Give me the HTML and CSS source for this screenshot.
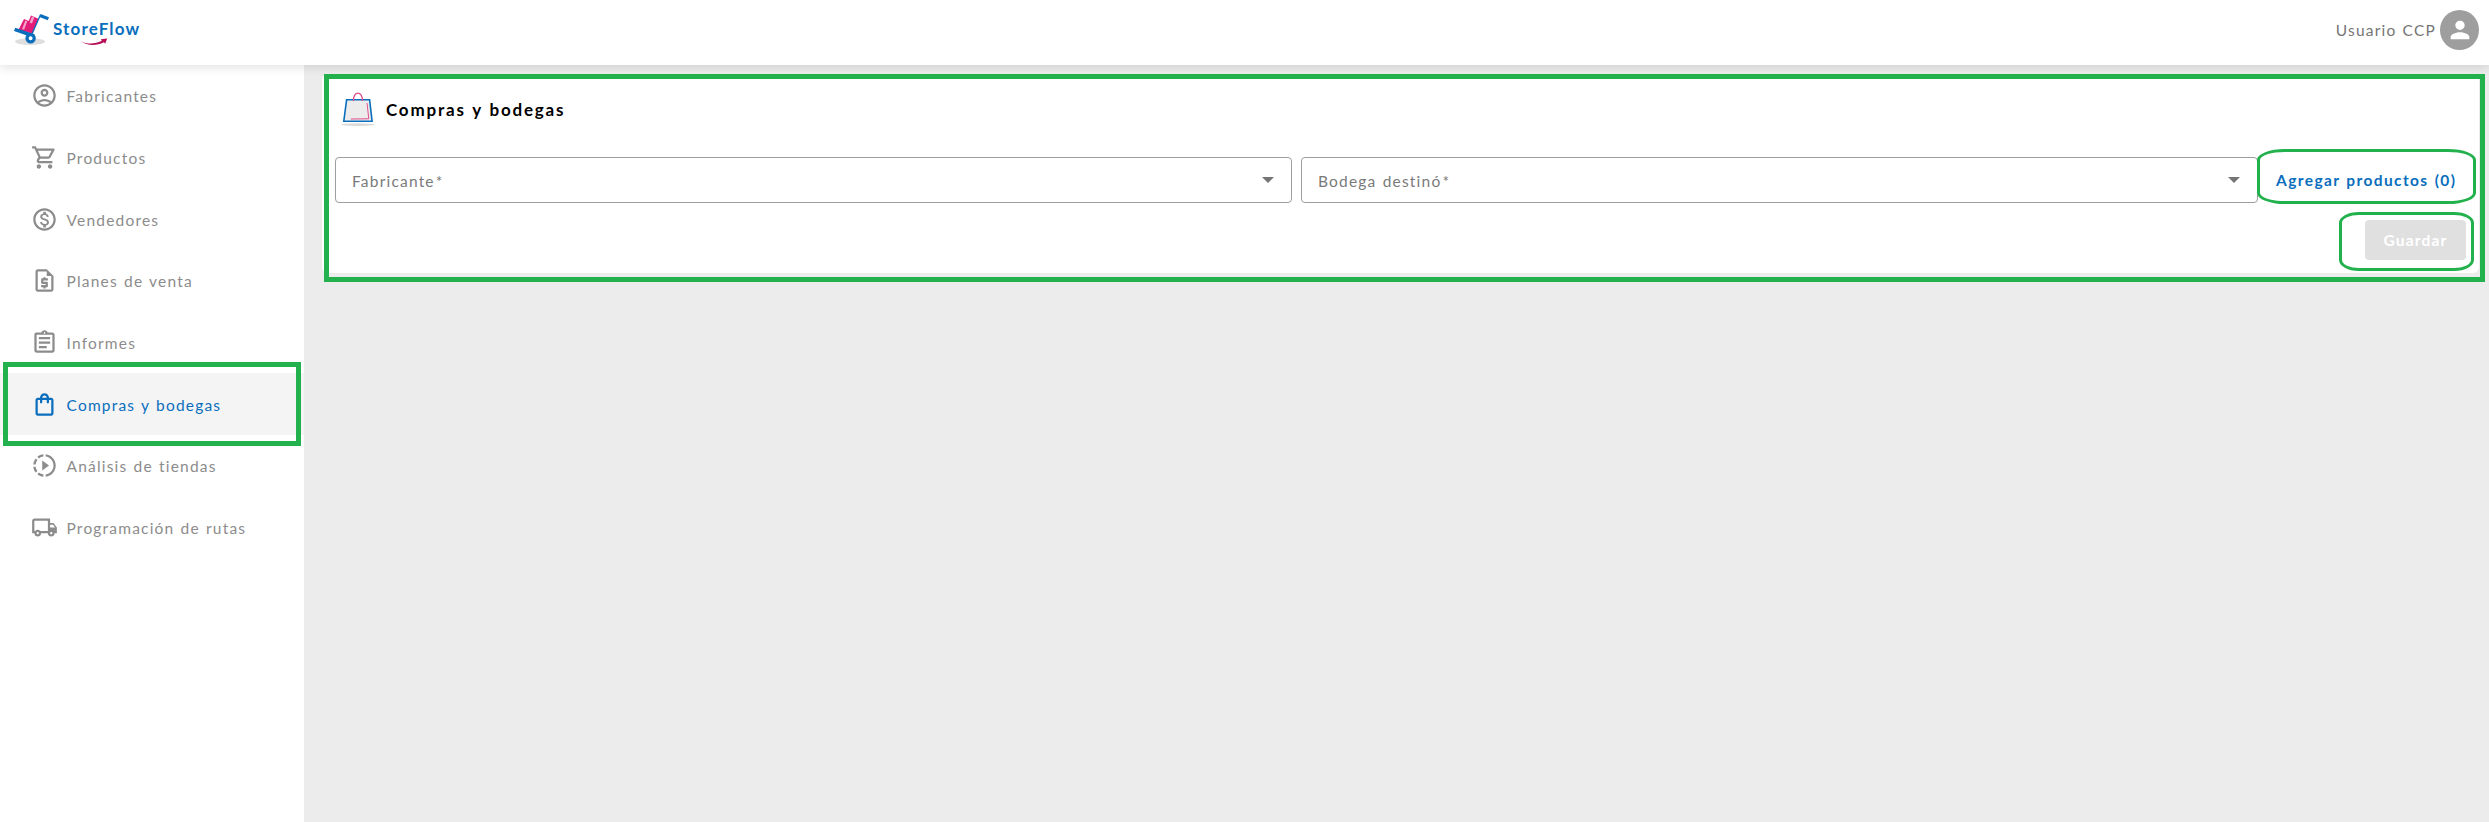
FILE: index.html
```html
<!DOCTYPE html>
<html lang="es">
<head>
<meta charset="utf-8">
<title>StoreFlow</title>
<link rel="stylesheet" href="styles.css">
</head>
<body>
<header class="topbar">
  <div class="brand">
    <svg class="brand-mark" viewBox="13 12 38 34" width="38" height="34">
      <ellipse cx="30" cy="41.6" rx="15" ry="3.4" fill="#dedede"/>
      <path d="M24 19l6 2.5-4.5 11-7-2.8z" fill="#e31c79"/>
      <path d="M31 15.5l7.5 3.2L32.5 34l-8-3z" fill="#e31c79"/>
      <path d="M25.3 20.4l2 .8-3.2 8.5-2-.8zM32 16.5l2.3 1-2.4 6-2.3-1z" fill="#f4a3c8"/>
      <path d="M40.5 14.8L31.5 35" stroke="#0a6ebd" stroke-width="1.3" fill="none"/>
      <path d="M40 15.6l8.4 3.2" stroke="#0a6ebd" stroke-width="3.2" fill="none"/>
      <path d="M14.6 29.4L34 36" stroke="#0a6ebd" stroke-width="3.6" fill="none"/>
      <circle cx="30.6" cy="38.2" r="3.6" fill="#fff" stroke="#0a6ebd" stroke-width="3.2"/>
    </svg>
    <div class="brand-text">
      <span class="brand-name">StoreFlow</span>
      <svg class="brand-swoosh" viewBox="80 38 28 8" width="28" height="8"><path d="M80.3 41c7 3.600 14.500 3.300 21.500-.2l-.9-1.500 6.300-.9-2 5.300-1.300-1.500C96.500 46 87.500 46 80.300 41z" fill="#b80d57"/></svg>
    </div>
  </div>
  <div class="user">
    <span class="user-name">Usuario CCP</span>
    <span class="avatar"><svg viewBox="0 0 24 24" width="28" height="28"><path d="M12 12c2.210 0 4-1.790 4-4s-1.790-4-4-4-4 1.790-4 4 1.790 4 4 4zm0 2c-2.670 0-8 1.340-8 4v2h16v-2c0-2.660-5.330-4-8-4z"/></svg></span>
  </div>
</header>
<div class="shell">
  <nav class="sidebar">
    <a class="item"><svg class="icon" viewBox="0 0 24 24"><path d="M12 2C6.480 2 2 6.480 2 12s4.480 10 10 10 10-4.480 10-10S17.520 2 12 2zM7.350 18.500C8.660 17.560 10.260 17 12 17s3.340.56 4.650 1.500C15.340 19.440 13.740 20 12 20s-3.340-.56-4.650-1.500zm10.790-1.380C16.450 15.800 14.320 15 12 15s-4.450.8-6.140 2.120C4.700 15.730 4 13.950 4 12c0-4.420 3.580-8 8-8s8 3.580 8 8c0 1.950-.7 3.730-1.860 5.120zM12 6c-1.930 0-3.500 1.570-3.500 3.500S10.070 13 12 13s3.500-1.570 3.500-3.500S13.930 6 12 6zm0 5c-.83 0-1.500-.67-1.500-1.500S11.170 8 12 8s1.500.67 1.500 1.500S12.830 11 12 11z"/></svg><span>Fabricantes</span></a>
    <a class="item"><svg class="icon" viewBox="0 0 24 24"><path d="M15.550 13c.75 0 1.410-.41 1.750-1.030l3.580-6.490A.996.996 0 0 0 20.010 4H5.210l-.94-2H1v2h2l3.600 7.590-1.350 2.440C4.520 15.370 5.480 17 7 17h12v-2H7l1.100-2h7.450zM6.160 6h12.150l-2.760 5H8.530L6.160 6zM7 18c-1.100 0-1.990.9-1.990 2S5.900 22 7 22s2-.9 2-2-.9-2-2-2zm10 0c-1.100 0-1.990.9-1.990 2s.89 2 1.990 2 2-.9 2-2-.9-2-2-2z"/></svg><span>Productos</span></a>
    <a class="item"><svg class="icon" viewBox="0 0 24 24"><path d="M12 2C6.480 2 2 6.480 2 12s4.480 10 10 10 10-4.480 10-10S17.520 2 12 2zm0 18c-4.410 0-8-3.590-8-8s3.590-8 8-8 8 3.590 8 8-3.590 8-8 8zm.31-8.860c-1.770-.45-2.340-.94-2.340-1.670 0-.84.79-1.430 2.100-1.430 1.380 0 1.900.66 1.940 1.640h1.710c-.05-1.340-.87-2.570-2.490-2.970V5H10.900v1.690c-1.510.32-2.720 1.300-2.720 2.810 0 1.790 1.490 2.690 3.660 3.210 1.950.46 2.340 1.150 2.340 1.870 0 .53-.39 1.390-2.100 1.390-1.600 0-2.230-.72-2.320-1.640H8.040c.1 1.700 1.360 2.660 2.860 2.970V19h2.340v-1.670c1.520-.29 2.720-1.160 2.730-2.770-.01-2.200-1.900-2.960-3.660-3.420z"/></svg><span>Vendedores</span></a>
    <a class="item"><svg class="icon" viewBox="0 0 24 24"><path d="M14 2H6c-1.100 0-1.990.9-1.990 2L4 20c0 1.100.89 2 1.990 2H18c1.100 0 2-.9 2-2V8l-6-6zM6 20V4h8v4h4v12H6zM11 19h2v-1h1c.55 0 1-.45 1-1v-3c0-.55-.45-1-1-1h-3v-1h4v-2h-2V9h-2v1h-1c-.55 0-1 .45-1 1v3c0 .55.45 1 1 1h3v1H9v2h2v1z"/></svg><span>Planes de venta</span></a>
    <a class="item"><svg class="icon" viewBox="0 0 24 24"><path d="M7 15h7v2H7zm0-4h10v2H7zm0-4h10v2H7zm12-4h-4.180C14.400 1.840 13.300 1 12 1c-1.300 0-2.400.84-2.820 2H5c-.14 0-.27.01-.4.04-.39.08-.74.28-1.010.55-.18.18-.33.4-.43.64-.1.23-.16.49-.16.77v14c0 .27.06.54.16.78s.25.45.43.64c.27.27.62.47 1.010.55.13.02.26.03.4.03h14c1.100 0 2-.9 2-2V5c0-1.100-.9-2-2-2zm-7-.25c.41 0 .75.34.75.75s-.34.75-.75.75-.75-.34-.75-.75.34-.75.75-.75zM19 19H5V5h14v14z"/></svg><span>Informes</span></a>
    <a class="item active"><svg class="icon" viewBox="0 0 24 24"><path d="M18 6h-2c0-2.210-1.790-4-4-4S8 3.790 8 6H6c-1.100 0-2 .9-2 2v12c0 1.100.9 2 2 2h12c1.100 0 2-.9 2-2V8c0-1.100-.9-2-2-2zm-6-2c1.100 0 2 .9 2 2h-4c0-1.100.9-2 2-2zm6 16H6V8h2v2c0 .55.45 1 1 1s1-.45 1-1V8h4v2c0 .55.45 1 1 1s1-.45 1-1V8h2v12z"/></svg><span>Compras y bodegas</span></a>
    <a class="item"><svg class="icon" viewBox="0 0 24 24"><path d="M10 7.500v9l6-4.500zM11 4.070V2.050c-2.010.2-3.840 1-5.320 2.210L7.100 5.690c1.110-.86 2.440-1.440 3.900-1.620zM5.690 7.100L4.260 5.680C3.050 7.160 2.250 8.990 2.050 11h2.020c.18-1.460.76-2.790 1.620-3.900zM4.070 13H2.050c.2 2.010 1 3.840 2.210 5.320l1.430-1.430c-.86-1.100-1.440-2.430-1.620-3.890zm1.610 6.740C7.160 20.950 9 21.750 11 21.950v-2.020c-1.460-.18-2.790-.76-3.900-1.620l-1.420 1.430zM22 12c0 5.160-3.920 9.420-8.950 9.950v-2.020C16.970 19.410 20 16.050 20 12s-3.030-7.410-6.950-7.930V2.050C18.080 2.580 22 6.840 22 12z"/></svg><span>Análisis de tiendas</span></a>
    <a class="item"><svg class="icon" viewBox="0 0 24 24"><path d="M20 8h-3V4H3c-1.100 0-2 .9-2 2v11h2c0 1.660 1.340 3 3 3s3-1.340 3-3h6c0 1.660 1.340 3 3 3s3-1.340 3-3h2v-5l-3-4zm-.5 1.500l1.960 2.500H17V9.500h2.500zM6 18c-.55 0-1-.45-1-1s.45-1 1-1 1 .45 1 1-.45 1-1 1zm2.220-3c-.55-.61-1.330-1-2.220-1s-1.670.39-2.220 1H3V6h12v9H8.220zM18 18c-.55 0-1-.45-1-1s.45-1 1-1 1 .45 1 1-.45 1-1 1z"/></svg><span>Programación de rutas</span></a>
  </nav>
  <main class="content">
    <section class="card">
      <div class="card-head">
        <svg viewBox="340 91 36 36" width="36" height="36">
          <ellipse cx="358" cy="124.600" rx="17.500" ry="1.300" fill="#d9d9d9"/>
          <path d="M346.600 99.800h23l2.500 21.400h-28.300z" fill="#ececec" stroke="#0a6ebd" stroke-width="1.600"/>
          <path d="M367 103l1.800 15.800-18 .2" fill="none" stroke="#e0508f" stroke-width="1"/>
          <path d="M353.500 101c-.6-10.500 9.300-10.500 9 0" fill="none" stroke="#e0508f" stroke-width="1.300"/>
        </svg>
        <h1 class="title">Compras y bodegas</h1>
      </div>
      <div class="fields">
        <div class="select"><span>Fabricante<i>*</i></span><b class="caret"></b></div>
        <div class="select"><span>Bodega destinó<i>*</i></span><b class="caret"></b></div>
        <button class="link">Agregar productos (0)</button>
      </div>
      <div class="actions"><button class="save" disabled>Guardar</button></div>
    </section>
  </main>
</div>
<div class="mark mark-menu"></div>
<div class="mark mark-card"></div>
<div class="mark mark-add"></div>
<div class="mark mark-save"></div>
</body>
</html>
```
FILE: styles.css
```css
* { box-sizing: border-box; }
body {
  margin: 0;
  height: 822px;
  display: flex;
  flex-direction: column;
  overflow: hidden;
  background: #ececec;
  font-family: Lato, "Open Sans", sans-serif;
  font-size: 15.5px;
  letter-spacing: 1.2px;
  word-spacing: 1px;
}
button { border: 0; font: inherit; letter-spacing: inherit; word-spacing: inherit; padding: 0; }

.topbar {
  height: 65px;
  flex: none;
  display: flex;
  justify-content: space-between;
  align-items: flex-start;
  padding: 10px 10px 0 13px;
  background: #fff;
  box-shadow: 0 2px 10px rgba(0, 0, 0, .13);
  z-index: 1;
}
.brand { display: flex; gap: 2px; padding-top: 2px; }
.brand-text { display: flex; flex-direction: column; }
.brand-name { color: #0a6ebd; font-size: 17px; font-weight: 700; line-height: 22px; padding-top: 6px; letter-spacing: 1.15px; height: 26px; }
.brand-swoosh { margin-left: 27px; }
.user { display: flex; align-items: center; gap: 4px; color: #757575; }
.avatar { width: 39px; height: 40px; border-radius: 50%; background: #9e9e9e; display: grid; place-items: center; fill: #fff; }

.shell { flex: 1; display: flex; }
.sidebar { width: 304px; background: #fff; color: #8c8c8c; }
.item { display: flex; align-items: center; gap: 8.5px; height: 61.7px; padding-left: 31px; }
.item span { padding-top: 1px; }
.icon { width: 27px; height: 27px; fill: currentColor; }
.active { background: #f4f4f4; color: #0a6ebd; }

.content { flex: 1; padding: 9px 10px 0 18px; }
.card { height: 199px; background: #fff; border-radius: 6px; padding: 17px 13px 0; }
.card-head { display: flex; align-items: center; gap: 10px; padding-left: 5px; height: 36px; }
.title { margin: 0; font-size: 17px; font-weight: 700; color: #000; letter-spacing: 1.8px; }
.fields { display: flex; margin-top: 30px; }
.select {
  width: 957px;
  height: 46px;
  display: flex;
  align-items: center;
  justify-content: space-between;
  padding: 0 17px 0 16px;
  border: 1px solid #9e9e9e;
  border-radius: 4px;
  color: #7a7a7a;
}
.select + .select { margin-left: 9px; }
.select span { padding-top: 1px; }
.select i { font-style: normal; margin-left: 1px; }
.caret { border: 6px solid transparent; border-top-color: #757575; border-bottom: 0; }
.link { margin-left: 18px; background: none; color: #0a6ebd; font-weight: 700; white-space: nowrap; letter-spacing: 1.4px; }
.actions { display: flex; justify-content: flex-end; padding-top: 17px; }
.save { width: 101px; height: 40px; border-radius: 4px; background: #e0e0e0; color: #fff; font-weight: 700; }

/* Highlight outlines drawn over the interface */
.mark { position: absolute; z-index: 2; border: 5px solid #22b14c; }
.mark-menu { left: 3px; top: 362px; width: 298px; height: 84px; }
.mark-card { left: 324px; top: 74px; width: 2161px; height: 208px; }
.mark-add { left: 2257px; top: 149px; width: 219px; height: 55px; border-width: 3px; border-radius: 28px / 11px; }
.mark-save { left: 2339px; top: 212px; width: 135px; height: 59px; border-width: 3px; border-radius: 20px / 11px; }
```
